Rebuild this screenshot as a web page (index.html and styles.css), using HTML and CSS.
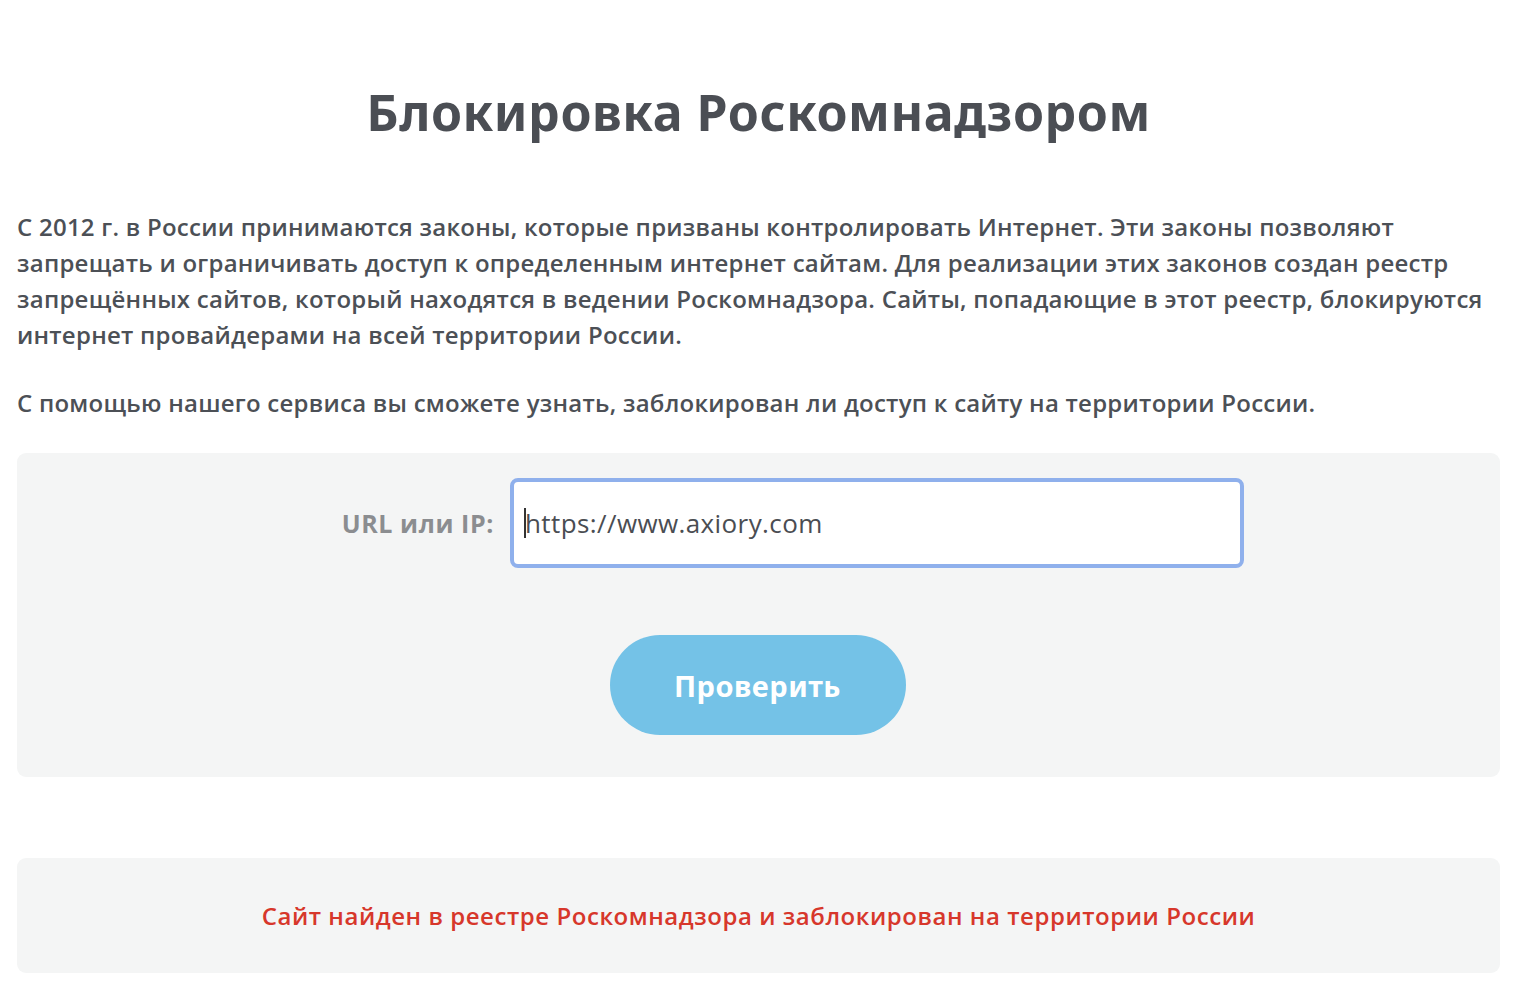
FILE: index.html
```html
<!DOCTYPE html>
<html lang="ru">
<head>
<meta charset="utf-8">
<title>Блокировка Роскомнадзором</title>
<link rel="stylesheet" href="styles.css">
</head>
<body>
<main class="page">
  <h1 class="title">Блокировка Роскомнадзором</h1>
  <p class="text">С 2012 г. в России принимаются законы, которые призваны контролировать Интернет. Эти законы позволяют запрещать и ограничивать доступ к определенным интернет сайтам. Для реализации этих законов создан реестр запрещённых сайтов, который находятся в ведении Роскомнадзора. Сайты, попадающие в этот реестр, блокируются интернет провайдерами на всей территории России.</p>
  <p class="text">С помощью нашего сервиса вы сможете узнать, заблокирован ли доступ к сайту на территории России.</p>
  <form class="check">
    <div class="check-row">
      <label class="check-label" for="url">URL или IP:</label>
      <div class="check-input" id="url"><span class="caret"></span>https://www.axiory.com</div>
    </div>
    <div class="check-actions">
      <button type="button" class="check-btn">Проверить</button>
    </div>
  </form>
  <div class="result">Сайт найден в реестре Роскомнадзора и заблокирован на территории России</div>
</main>
</body>
</html>
```
FILE: styles.css
```css
html, body {
  margin: 0;
  padding: 0;
  background: #fff;
}
body {
  font-family: "Open Sans", "Noto Sans", sans-serif;
  color: #4c5056;
}
.page {
  width: 1483px;
  margin-left: 17px;
  padding-top: 79px;
}
.title {
  margin: 0;
  text-align: center;
  font-family: "Noto Sans", sans-serif;
  font-weight: 700;
  font-size: 50px;
  letter-spacing: 0.55px;
  line-height: 66px;
  color: #4b4e54;
}
.text {
  margin: 0;
  font-size: 24px;
  line-height: 36px;
  font-weight: 600;
  letter-spacing: 0.25px;
}
.title + .text {
  margin-top: 64px;
}
.text + .text {
  margin-top: 32px;
}
.check {
  margin-top: 32px;
  background: #f4f5f5;
  border-radius: 9px;
  padding: 25px 0 42px;
}
.check-row {
  display: flex;
  align-items: center;
  padding-left: 300px;
}
.check-label {
  width: 177px;
  text-align: right;
  font-size: 25px;
  font-weight: 700;
  letter-spacing: 0.6px;
  color: #8b8d90;
  margin-right: 16px;
}
.check-input {
  box-sizing: border-box;
  width: 734px;
  height: 90px;
  border: 4px solid #8fb0ec;
  border-radius: 8px;
  background: #fff;
  display: flex;
  align-items: center;
  padding-left: 10px;
  font-size: 26px;
  letter-spacing: 0.4px;
  color: #4a4d52;
}
.caret {
  width: 2px;
  height: 30px;
  background: #333;
  margin-right: -1px;
}
.check-actions {
  display: flex;
  justify-content: center;
  margin-top: 67px;
}
.check-btn {
  width: 296px;
  height: 100px;
  border: none;
  border-radius: 50px;
  background: #74c2e7;
  color: #fff;
  font-family: "Noto Sans", sans-serif;
  font-weight: 700;
  font-size: 29px;
  letter-spacing: 0.5px;
  margin-left: -2px;
}
.result {
  margin-top: 81px;
  background: #f4f5f5;
  border-radius: 9px;
  height: 115px;
  display: flex;
  align-items: center;
  justify-content: center;
  color: #d7372b;
  font-size: 24px;
  font-weight: 600;
  letter-spacing: 0.55px;
}
```
